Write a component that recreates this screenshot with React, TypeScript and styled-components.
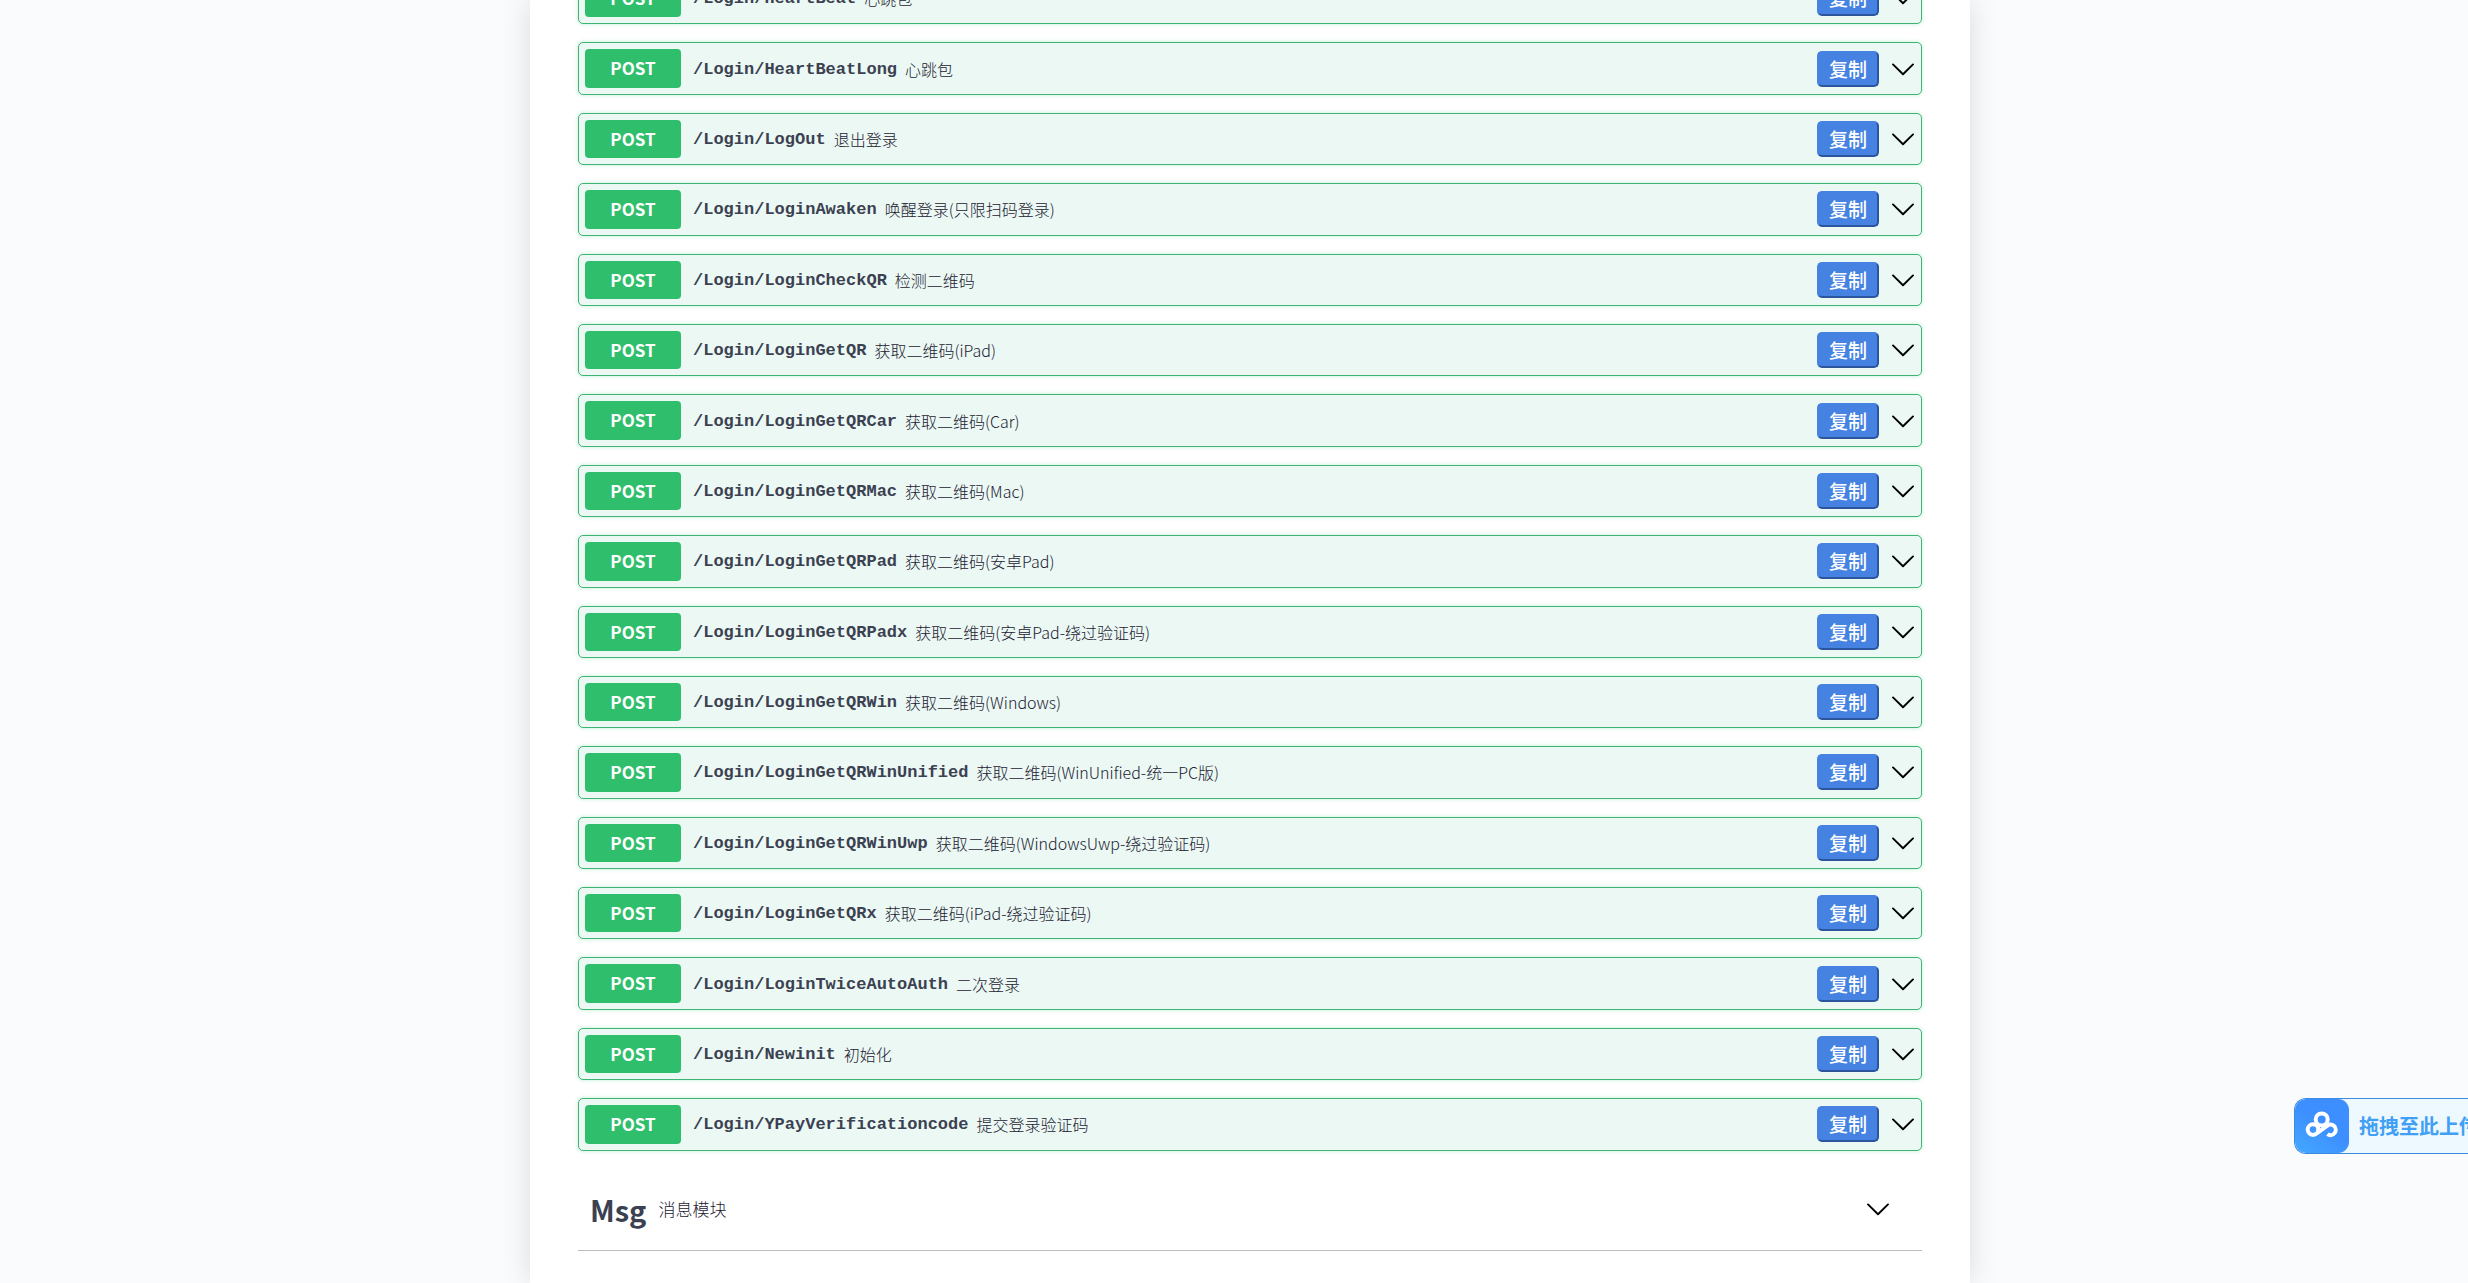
import React from 'react';
import styled, { createGlobalStyle } from 'styled-components';

const sans = `"Noto Sans CJK SC", "Noto Sans", sans-serif`;
const mono = `"Liberation Mono", "Noto Sans CJK SC", monospace`;

const GlobalStyle = createGlobalStyle`
  *, *::before, *::after { box-sizing: border-box; }
  body {
    margin: 0;
    background: #f9fbfd;
    color: #3b4151;
    font-family: ${sans};
  }
`;

const Page = styled.div`
  height: 100vh;
  overflow: hidden;
  padding-left: 32px;
  display: flex;
  justify-content: center;
`;

const Card = styled.main`
  width: 100%;
  max-width: 1440px;
  min-height: 100%;
  padding: 0 48px;
  background: #fff;
  box-shadow: 0 0 28px rgba(0, 0, 0, 0.13);
`;

/* The list is scrolled so that its first entry is partly above the window. */
const OperationList = styled.ul`
  list-style: none;
  margin: -28px 0 0;
  padding: 0;
  display: flex;
  flex-direction: column;
  gap: 18px;
`;

const Operation = styled.li`
  display: flex;
  align-items: center;
  padding: 6px 7px 6px 6px;
  border: 1px solid #3fb475;
  border-radius: 5px;
  background: #ebf8f4;
  box-shadow: 0 0 4px rgba(40, 200, 110, 0.3);
`;

const Method = styled.span`
  width: 96px;
  padding: 9px 0;
  border-radius: 4px;
  background: #2fbe6b;
  color: #fff;
  font-size: 17px;
  font-weight: 700;
  line-height: 1.2;
  text-align: center;
`;

const Path = styled.a`
  margin-left: 12px;
  padding-top: 2px;
  color: #3b4151;
  font-family: ${mono};
  font-size: 17px;
  font-weight: 700;
  line-height: 20px;
  text-decoration: none;
`;

const Description = styled.span`
  flex: 1;
  margin-left: 8px;
  color: #1c2030;
  font-size: 16px;
  font-weight: 300;
  line-height: 20px;
`;

const CopyButton = styled.button`
  width: 62px;
  height: 36px;
  margin: 0 12px 0 0;
  padding: 0;
  border: 2px solid;
  border-color: #4582e2 #2b559c #2b559c #4582e2;
  border-radius: 5px;
  background: #4582e2;
  color: #fff;
  font-family: ${sans};
  font-size: 19px;
  font-weight: 500;
  line-height: 28px;
`;

const ToggleButton = styled.button`
  display: flex;
  padding: 0;
  border: 0;
  background: none;
`;

const TagHeader = styled.header`
  display: flex;
  align-items: center;
  height: 100px;
  padding: 18px 33px 0 12px;
  border-bottom: 1px solid #b9bdc2;
`;

const TagName = styled.h2`
  margin: 0;
  font-size: 29px;
  font-weight: 700;
  line-height: 36px;
`;

const TagDescription = styled.small`
  flex: 1;
  margin-left: 12px;
  color: #1c2030;
  font-size: 17px;
  font-weight: 300;
  line-height: 24px;
`;

const UploadDock = styled.button`
  position: fixed;
  top: 1098px;
  right: 0;
  width: 174px;
  height: 56px;
  padding: 0;
  display: flex;
  align-items: center;
  gap: 10px;
  overflow: hidden;
  border: 1px solid #3b8be0;
  border-right: 0;
  border-radius: 12px 0 0 12px;
  background: #eef8ff;
`;

const UploadIcon = styled.span`
  flex: none;
  display: flex;
  width: 54px;
  height: 54px;
  border-radius: 11px;
  background: linear-gradient(35deg, #43a9ff, #3d8eff 55%);
`;

const UploadText = styled.span`
  flex: none;
  color: #41a0f5;
  font-family: ${sans};
  font-size: 20px;
  font-weight: 700;
  line-height: 28px;
  white-space: nowrap;
`;

const Chevron = () => (
  <svg width="23" height="14" viewBox="0 0 23 14" fill="none" aria-hidden="true">
    <path d="M2 2.4 L12 12.2 L22 2.4" stroke="#000" strokeWidth="1.9" strokeLinecap="round" strokeLinejoin="round" />
  </svg>
);

const CloudLogo = () => (
  <svg width="54" height="54" viewBox="0 0 54 54" fill="none" stroke="#fff" strokeWidth="4" aria-hidden="true">
    <circle cx="26.7" cy="20.4" r="6" />
    <circle cx="18" cy="30.6" r="5.3" />
    <path d="M31.6 27.2 A5.3 5.3 0 1 1 32.4 35.2" />
    <path d="M22 34.2 L32.4 26.6" />
  </svg>
);

const operations = [
  ['/Login/HeartBeat', '心跳包'],
  ['/Login/HeartBeatLong', '心跳包'],
  ['/Login/LogOut', '退出登录'],
  ['/Login/LoginAwaken', '唤醒登录(只限扫码登录)'],
  ['/Login/LoginCheckQR', '检测二维码'],
  ['/Login/LoginGetQR', '获取二维码(iPad)'],
  ['/Login/LoginGetQRCar', '获取二维码(Car)'],
  ['/Login/LoginGetQRMac', '获取二维码(Mac)'],
  ['/Login/LoginGetQRPad', '获取二维码(安卓Pad)'],
  ['/Login/LoginGetQRPadx', '获取二维码(安卓Pad-绕过验证码)'],
  ['/Login/LoginGetQRWin', '获取二维码(Windows)'],
  ['/Login/LoginGetQRWinUnified', '获取二维码(WinUnified-统一PC版)'],
  ['/Login/LoginGetQRWinUwp', '获取二维码(WindowsUwp-绕过验证码)'],
  ['/Login/LoginGetQRx', '获取二维码(iPad-绕过验证码)'],
  ['/Login/LoginTwiceAutoAuth', '二次登录'],
  ['/Login/Newinit', '初始化'],
  ['/Login/YPayVerificationcode', '提交登录验证码'],
];

export default function App() {
  return (
    <>
      <GlobalStyle />
      <Page>
        <Card>
          <OperationList>
            {operations.map(([path, description]) => (
              <Operation key={path}>
                <Method>POST</Method>
                <Path href={'#' + path}>{path}</Path>
                <Description>{description}</Description>
                <CopyButton type="button">复制</CopyButton>
                <ToggleButton type="button" aria-label={path}>
                  <Chevron />
                </ToggleButton>
              </Operation>
            ))}
          </OperationList>
          <TagHeader>
            <TagName>Msg</TagName>
            <TagDescription>消息模块</TagDescription>
            <ToggleButton type="button" aria-label="Msg">
              <Chevron />
            </ToggleButton>
          </TagHeader>
        </Card>
      </Page>
      <UploadDock type="button">
        <UploadIcon>
          <CloudLogo />
        </UploadIcon>
        <UploadText>拖拽至此上传</UploadText>
      </UploadDock>
    </>
  );
}
